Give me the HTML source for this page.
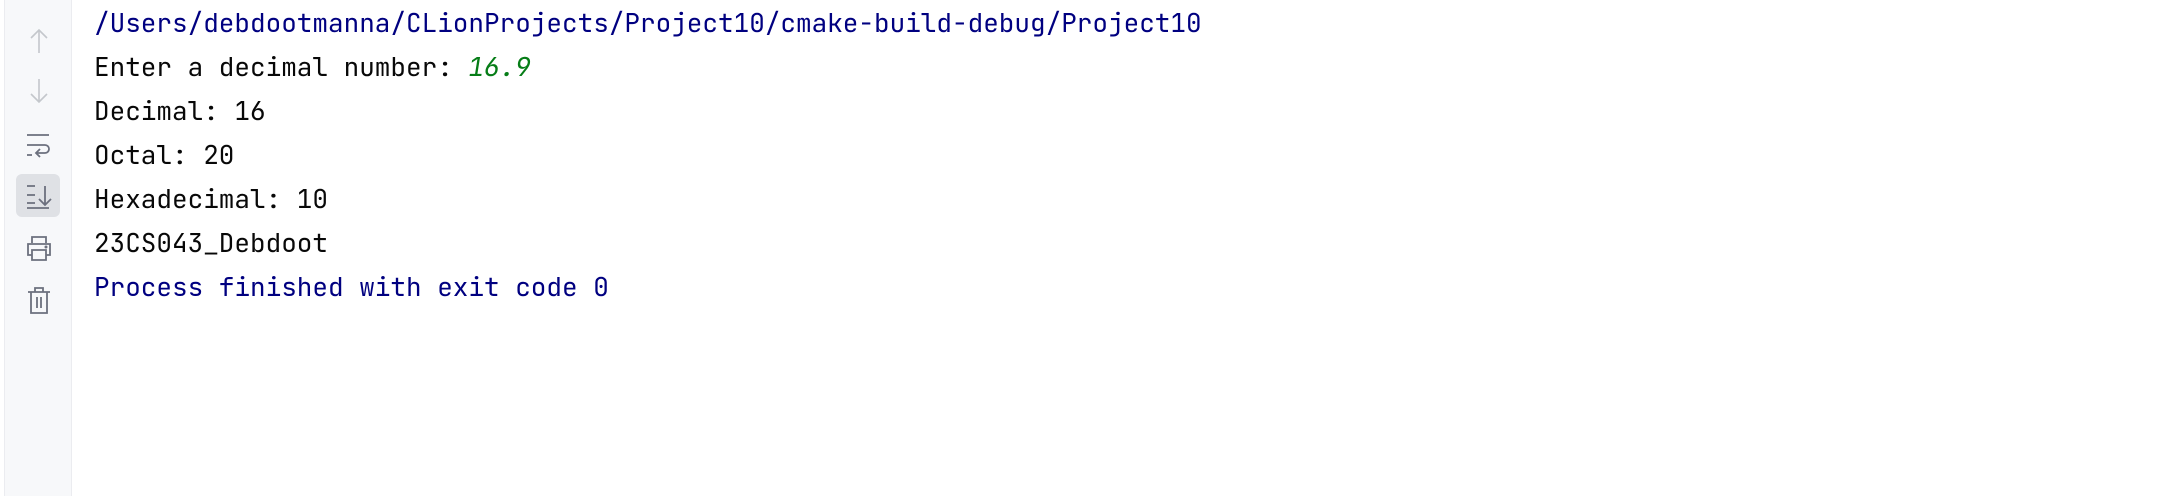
<!DOCTYPE html>
<html><head><style>
body{margin:0;width:2176px;height:496px;background:#fff;position:relative;overflow:hidden;font-family:"JetBrains Mono","Liberation Mono",monospace;}
.side{position:absolute;left:4px;top:0;width:66px;height:496px;background:#f7f8fa;border-left:1px solid #ebecf0;border-right:1px solid #ebecf0;}
.hl{position:absolute;left:16px;top:174px;width:44px;height:43px;background:#dfe1e5;border-radius:6px;}
svg{position:absolute;}
.l{position:absolute;left:94px;font-size:26px;line-height:44px;color:#080808;white-space:pre;}
.b{color:#000080}.g{color:#067d17;font-style:italic}
</style></head><body>
<div class="side"></div>
<div class="hl"></div>
<svg style="left:27px;top:27px" width="24" height="28" viewBox="0 0 24 28" fill="none" stroke="#c4c7cc" stroke-width="1.6"><path d="M12 26V3M4 11l8-8 8 8"/></svg>
<svg style="left:27px;top:77px" width="24" height="28" viewBox="0 0 24 28" fill="none" stroke="#c4c7cc" stroke-width="1.6"><path d="M12 2v23M4 17l8 8 8-8"/></svg>
<svg style="left:26px;top:133px" width="28" height="26" viewBox="0 0 28 26" fill="none" stroke="#6c707e" stroke-width="1.8"><path d="M1 2h22M1 12h18a4 4 0 0 1 0 8h-8M14 16l-4 4 4 4M1 22h5"/></svg>
<svg style="left:26px;top:183px" width="28" height="26" viewBox="0 0 28 26" fill="none" stroke="#6c707e" stroke-width="1.8"><path d="M1 3h8M1 12h8M1 20h8M1 25h22M19 3v19M13 16l6 6 6-6"/></svg>
<svg style="left:26px;top:235px" width="26" height="26" viewBox="0 0 26 26" fill="none" stroke="#6c707e" stroke-width="1.8"><path d="M6 8V2h14v6M6 20H2V9h22v11h-4M6 15h14v10H6z"/><circle cx="20" cy="12" r="0.6" fill="#6c707e"/></svg>
<svg style="left:27px;top:285px" width="24" height="30" viewBox="0 0 24 30" fill="none" stroke="#6c707e" stroke-width="1.8"><path d="M1 7h22M8 7V3h8v4M4 7v21h16V7M10 12v11M14 12v11"/></svg>
<div class="l b" style="top:1px">/Users/debdootmanna/CLionProjects/Project10/cmake-build-debug/Project10</div>
<div class="l" style="top:45px">Enter a decimal number: <span class="g">16.9</span></div>
<div class="l" style="top:89px">Decimal: 16</div>
<div class="l" style="top:133px">Octal: 20</div>
<div class="l" style="top:177px">Hexadecimal: 10</div>
<div class="l" style="top:221px">23CS043_Debdoot</div>
<div class="l b" style="top:265px">Process finished with exit code 0</div>
</body></html>
